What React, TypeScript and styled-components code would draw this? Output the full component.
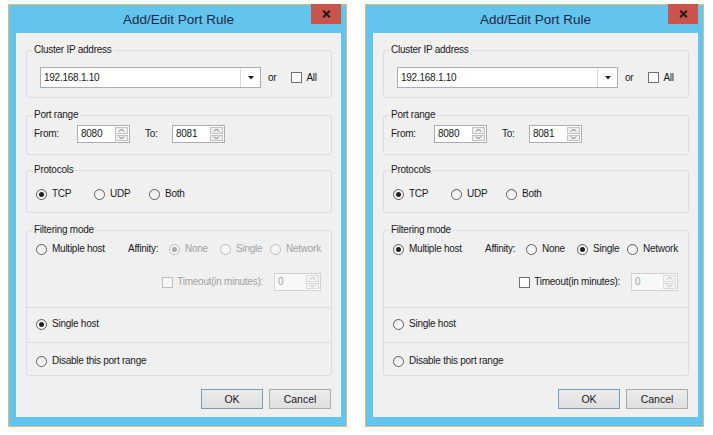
import React from "react";
import styled, { createGlobalStyle } from "styled-components";

const GlobalStyle = createGlobalStyle`
  html, body { margin: 0; padding: 0; background: #ffffff; }
  body { font-family: "Liberation Sans", Arial, sans-serif; }
`;

const Page = styled.div`
  display: flex;
  gap: 18px;
  padding: 4px 0 0 8px;
  width: 713px;
  height: 435px;
  box-sizing: border-box;
`;

const Frame = styled.div`
  width: 339px;
  height: 423px;
  box-sizing: border-box;
  border: 1px solid #d8c07c;
  background: #63c4ee;
  padding: 0 5px 9px 7px;
  display: flex;
  flex-direction: column;
`;

const TitleBar = styled.div`
  height: 28px;
  flex: none;
  display: grid;
  grid-template-columns: 1fr auto 1fr;
  align-items: start;
`;

const Title = styled.div`
  grid-column: 2;
  margin-top: 7px;
  font-size: 13.5px;
  line-height: 16px;
  color: #1e2947;
  white-space: nowrap;
`;

const CloseButton = styled.div`
  grid-column: 3;
  justify-self: end;
  width: 30px;
  height: 20px;
  margin-top: -1px;
  background: #c9544c;
  display: flex;
  align-items: center;
  justify-content: center;
`;

const Client = styled.div`
  flex: 1;
  background: #f0f0f0;
  display: flex;
  flex-direction: column;
  padding: 17px 9px 0 10px;
  font-size: 10px;
  letter-spacing: -0.25px;
  color: #1a1a1a;
`;

const Group = styled.div<{ $h: number; $mt?: number }>`
  box-sizing: border-box;
  height: ${(p) => p.$h}px;
  margin-top: ${(p) => p.$mt ?? 0}px;
  border: 1px solid #dcdcdc;
  border-radius: 3px;
  display: flex;
  flex-direction: column;
`;

const Section = styled.div<{ $h?: number; $pt?: number; $sep?: boolean }>`
  box-sizing: border-box;
  ${(p) => (p.$h ? `height: ${p.$h}px; flex: none;` : "flex: 1;")}
  padding: ${(p) => p.$pt ?? 0}px 0 0 7px;
  border-top: ${(p) => (p.$sep ? "1px solid #dcdcdc" : "none")};
  display: flex;
  flex-direction: column;
`;

const Legend = styled.div`
  margin: -7px 0 0 -2px;
  padding: 0 2px;
  width: fit-content;
  height: 12px;
  line-height: 12px;
  background: #f0f0f0;
  white-space: nowrap;
`;

const Row = styled.div<{ $mt: number; $ml?: number; $h?: number }>`
  display: flex;
  align-items: center;
  margin-top: ${(p) => p.$mt}px;
  margin-left: ${(p) => p.$ml ?? 0}px;
  height: ${(p) => p.$h ?? 12}px;
  white-space: nowrap;
`;

const EndRow = styled(Row)`
  justify-content: flex-end;
  padding-right: 10px;
`;

const Grid = styled.div<{ $cols: string; $mt: number }>`
  display: grid;
  grid-template-columns: ${(p) => p.$cols};
  align-items: center;
  height: 12px;
  margin: ${(p) => p.$mt}px 0 0 2px;
  white-space: nowrap;
`;

const Combo = styled.div`
  width: 221px;
  height: 21px;
  box-sizing: border-box;
  border: 1px solid #abadb3;
  background: #ffffff;
  display: flex;
`;

const ComboText = styled.span`
  flex: 1;
  padding-left: 3px;
  line-height: 19px;
`;

const ComboButton = styled.span`
  width: 19px;
  border-left: 1px solid #dadada;
  display: flex;
  align-items: center;
  justify-content: center;
`;

const Label = styled.span<{ $w?: number; $ml?: number; $disabled?: boolean }>`
  display: inline-block;
  ${(p) => (p.$w ? `width: ${p.$w}px;` : "")}
  margin-left: ${(p) => p.$ml ?? 0}px;
  color: ${(p) => (p.$disabled ? "#a3a3a3" : "#1a1a1a")};
  line-height: 12px;
`;

const Check = styled.span<{ $disabled?: boolean }>`
  width: 11px;
  height: 11px;
  box-sizing: border-box;
  flex: none;
  border: 1px solid ${(p) => (p.$disabled ? "#bcbcbc" : "#707070")};
  background: ${(p) => (p.$disabled ? "#f6f6f6" : "#ffffff")};
`;

const CheckItem = styled.span<{ $ml?: number }>`
  display: inline-flex;
  align-items: center;
  gap: 4px;
  margin-left: ${(p) => p.$ml ?? 0}px;
`;

const RadioItem = styled.span`
  display: inline-flex;
  align-items: center;
  gap: 5px;
`;

const RadioCircle = styled.span<{ $checked?: boolean; $disabled?: boolean }>`
  width: 11px;
  height: 11px;
  box-sizing: border-box;
  flex: none;
  border-radius: 50%;
  border: 1px solid ${(p) => (p.$disabled ? "#bdbdbd" : "#5e5e5e")};
  background: ${(p) => (p.$disabled ? "#f5f5f5" : "linear-gradient(#ececec, #ffffff)")};
  display: flex;
  align-items: center;
  justify-content: center;
  &::after {
    content: "";
    display: ${(p) => (p.$checked ? "block" : "none")};
    width: 5px;
    height: 5px;
    border-radius: 50%;
    background: ${(p) => (p.$disabled ? "#a6a6a6" : "#222222")};
  }
`;

const Spin = styled.div<{ $w: number; $disabled?: boolean }>`
  width: ${(p) => p.$w}px;
  height: 18px;
  box-sizing: border-box;
  flex: none;
  border: 1px solid ${(p) => (p.$disabled ? "#d2d2d2" : "#abadb3")};
  background: ${(p) => (p.$disabled ? "#f8f8f8" : "#ffffff")};
  display: flex;
`;

const SpinText = styled.span<{ $disabled?: boolean }>`
  flex: 1;
  padding-left: 3px;
  line-height: 16px;
  color: ${(p) => (p.$disabled ? "#a3a3a3" : "#1a1a1a")};
`;

const SpinButtons = styled.div`
  width: 13px;
  display: flex;
  flex-direction: column;
  gap: 1px;
  padding: 1px 1px 1px 0;
`;

const SpinBtn = styled.div<{ $disabled?: boolean }>`
  flex: 1;
  border: 1px solid ${(p) => (p.$disabled ? "#dadada" : "#c3c3c3")};
  background: ${(p) => (p.$disabled ? "#f4f4f4" : "#eeeeee")};
  display: flex;
  align-items: center;
  justify-content: center;
`;

const ButtonRow = styled.div`
  display: flex;
  justify-content: flex-end;
  gap: 6px;
  margin-top: 13px;
  padding-right: 1px;
`;

const Button = styled.div<{ $default?: boolean }>`
  width: 62px;
  height: 20px;
  box-sizing: border-box;
  border: 1px solid ${(p) => (p.$default ? "#7d9cbc" : "#acacac")};
  background: linear-gradient(#ececec, #dfdfdf);
  display: flex;
  align-items: center;
  justify-content: center;
  font-size: 10.5px;
  letter-spacing: 0;
  color: #1a1a1a;
`;

const Chevron = ({ up, disabled }: { up?: boolean; disabled?: boolean }) => (
  <svg width="7" height="4" viewBox="0 0 7 4">
    <polyline
      points={up ? "1,3.5 3.5,1 6,3.5" : "1,0.5 3.5,3 6,0.5"}
      fill="none"
      stroke={disabled ? "#b8b8b8" : "#707070"}
      strokeWidth="1"
    />
  </svg>
);

const SpinBox = ({ w, value, disabled }: { w: number; value: string; disabled?: boolean }) => (
  <Spin $w={w} $disabled={disabled}>
    <SpinText $disabled={disabled}>{value}</SpinText>
    <SpinButtons>
      <SpinBtn $disabled={disabled}>
        <Chevron up disabled={disabled} />
      </SpinBtn>
      <SpinBtn $disabled={disabled}>
        <Chevron disabled={disabled} />
      </SpinBtn>
    </SpinButtons>
  </Spin>
);

const Radio = ({ label, checked, disabled }: { label: string; checked?: boolean; disabled?: boolean }) => (
  <RadioItem>
    <RadioCircle $checked={checked} $disabled={disabled} />
    <Label $disabled={disabled}>{label}</Label>
  </RadioItem>
);

const Dialog = ({ multiple }: { multiple: boolean }) => (
  <Frame>
    <TitleBar>
      <Title>Add/Edit Port Rule</Title>
      <CloseButton>
        <svg width="9" height="8" viewBox="0 0 9 8">
          <path d="M1.2 0.8 L7.8 7.2 M7.8 0.8 L1.2 7.2" stroke="#231a1a" strokeWidth="2.1" />
        </svg>
      </CloseButton>
    </TitleBar>
    <Client>
      <Group $h={48}>
        <Section>
          <Legend>Cluster IP address</Legend>
          <Row $mt={11} $ml={6} $h={21}>
            <Combo>
              <ComboText>192.168.1.10</ComboText>
              <ComboButton>
                <svg width="6" height="4" viewBox="0 0 6 4">
                  <polygon points="0,0 6,0 3,3.5" fill="#222" />
                </svg>
              </ComboButton>
            </Combo>
            <Label $ml={7}>or</Label>
            <CheckItem $ml={15}>
              <Check />
              <Label>All</Label>
            </CheckItem>
          </Row>
        </Section>
      </Group>

      <Group $h={40} $mt={17}>
        <Section>
          <Legend>Port range</Legend>
          <Row $mt={4} $h={18}>
            <Label $w={43}>From:</Label>
            <SpinBox w={53} value="8080" />
            <Label $w={27} $ml={15}>To:</Label>
            <SpinBox w={53} value="8081" />
          </Row>
        </Section>
      </Group>

      <Group $h={43} $mt={15}>
        <Section>
          <Legend>Protocols</Legend>
          <Grid $cols="58px 55px auto" $mt={12}>
            <Radio label="TCP" checked />
            <Radio label="UDP" />
            <Radio label="Both" />
          </Grid>
        </Section>
      </Group>

      <Group $h={146} $mt={17}>
        <Section>
          <Legend>Filtering mode</Legend>
          <Grid $cols="92px 41px 51px 50px auto" $mt={7}>
            <Radio label="Multiple host" checked={multiple} />
            <Label>Affinity:</Label>
            <Radio label="None" checked={!multiple} disabled={!multiple} />
            <Radio label="Single" checked={multiple} disabled={!multiple} />
            <Radio label="Network" disabled={!multiple} />
          </Grid>
          <EndRow $mt={18} $h={18}>
            <CheckItem>
              <Check $disabled={!multiple} />
              <Label $disabled={!multiple}>Timeout(in minutes):</Label>
            </CheckItem>
            <Label $w={11} />
            <SpinBox w={47} value="0" disabled />
          </EndRow>
        </Section>
        <Section $h={35} $pt={10} $sep>
          <Grid $cols="auto" $mt={0}>
            <Radio label="Single host" checked={!multiple} />
          </Grid>
        </Section>
        <Section $h={33} $pt={12} $sep>
          <Grid $cols="auto" $mt={0}>
            <Radio label="Disable this port range" />
          </Grid>
        </Section>
      </Group>

      <ButtonRow>
        <Button $default>OK</Button>
        <Button>Cancel</Button>
      </ButtonRow>
    </Client>
  </Frame>
);

export default function App() {
  return (
    <>
      <GlobalStyle />
      <Page>
        <Dialog multiple={false} />
        <Dialog multiple />
      </Page>
    </>
  );
}
